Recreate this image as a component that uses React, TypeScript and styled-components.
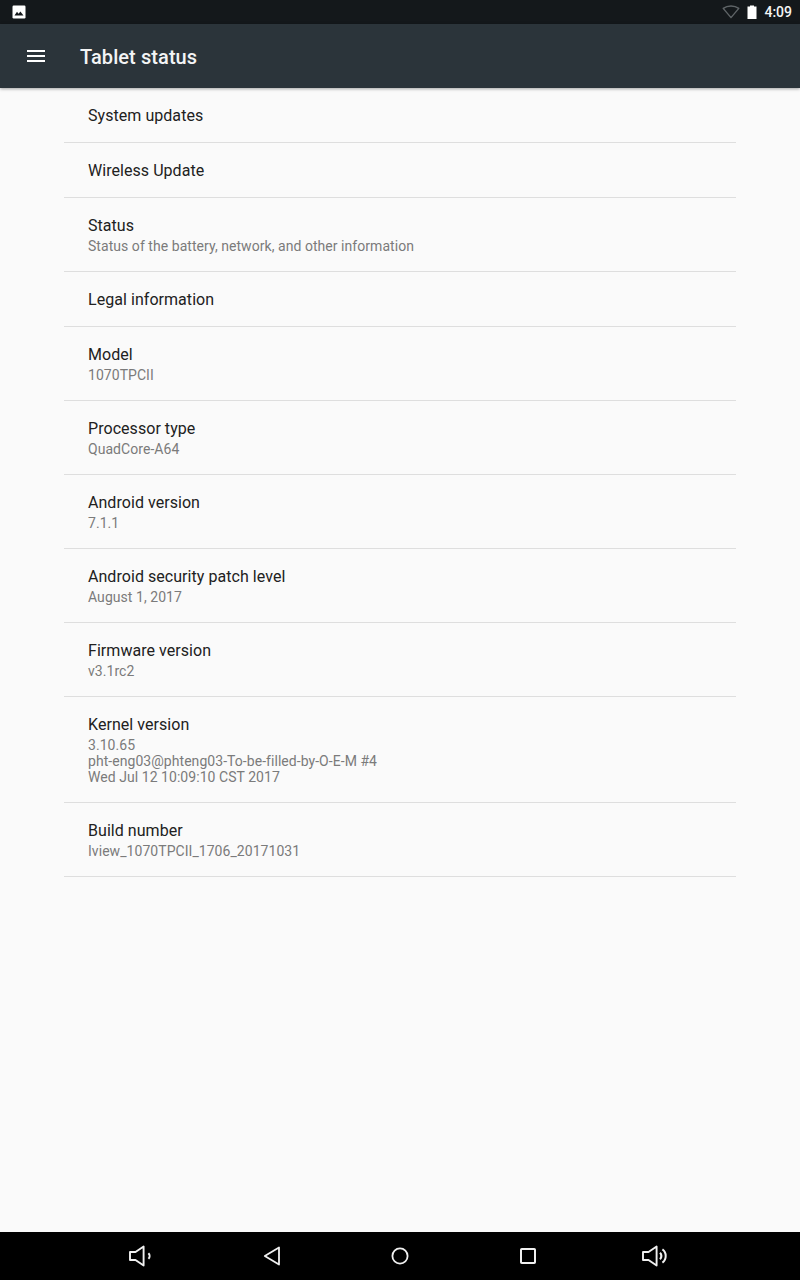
import React from "react";
import styled, { createGlobalStyle } from "styled-components";

const Global = createGlobalStyle`
  html, body { margin: 0; padding: 0; background: #fafafa; }
  * { box-sizing: border-box; }
`;

const Screen = styled.div`
  width: 800px;
  height: 1280px;
  display: flex;
  flex-direction: column;
  background: #fafafa;
  font-family: Roboto, "Liberation Sans", sans-serif;
  overflow: hidden;
`;

const StatusBar = styled.div`
  height: 24px;
  flex: none;
  background: #14181b;
  display: flex;
  align-items: center;
  justify-content: space-between;
  padding: 0 8px 0 12px;
  color: #fff;
`;

const StatusRight = styled.div`
  display: flex;
  align-items: center;
`;

const Clock = styled.span`
  font-size: 14px;
  font-weight: 500;
  color: #f4f5f5;
  margin-left: 7px;
`;

const Toolbar = styled.header`
  height: 64px;
  flex: none;
  background: #2b343a;
  display: flex;
  align-items: center;
  padding-left: 27px;
  box-shadow: 0 1px 3px rgba(0, 0, 0, 0.35);
  position: relative;
  z-index: 1;
`;

const Title = styled.h1`
  margin: 2px 0 0 35px;
  font-size: 20px;
  font-weight: 500;
  letter-spacing: 0.08px;
  color: #f3f4f5;
`;

const List = styled.main`
  flex: 1;
  padding: 0 64px;
`;

const Row = styled.div`
  padding: 17px 24px 15px;
  border-bottom: 1px solid #dedede;
`;

const RowTitle = styled.div`
  font-size: 16px;
  line-height: 22px;
  letter-spacing: 0.05px;
  color: #212121;
`;

const RowSub = styled.div`
  margin: 1px 0 2px;
  font-size: 14px;
  line-height: 16px;
  letter-spacing: 0.05px;
  color: #7b7b7b;
  white-space: pre-line;
`;

const NavBar = styled.nav`
  height: 48px;
  flex: none;
  background: #000;
  display: grid;
  grid-template-columns: repeat(5, 128px);
  justify-content: center;
  align-items: center;
  justify-items: center;
  color: #f0f0f0;
`;

const SpeakerSvg = styled.svg<{ $shift: number }>`
  margin-right: ${(p) => p.$shift * 2}px;
`;

const BatterySvg = styled.svg`
  margin-left: 7px;
`;

const rows: { title: string; sub?: string }[] = [
  { title: "System updates" },
  { title: "Wireless Update" },
  { title: "Status", sub: "Status of the battery, network, and other information" },
  { title: "Legal information" },
  { title: "Model", sub: "1070TPCII" },
  { title: "Processor type", sub: "QuadCore-A64" },
  { title: "Android version", sub: "7.1.1" },
  { title: "Android security patch level", sub: "August 1, 2017" },
  { title: "Firmware version", sub: "v3.1rc2" },
  {
    title: "Kernel version",
    sub: "3.10.65\npht-eng03@phteng03-To-be-filled-by-O-E-M #4\nWed Jul 12 10:09:10 CST 2017",
  },
  { title: "Build number", sub: "Iview_1070TPCII_1706_20171031" },
];

const ImageIcon = () => (
  <svg width="14" height="14" viewBox="0 0 14 14">
    <rect x="0.5" y="0.5" width="13" height="13" rx="1.2" fill="#fff" />
    <path d="M2.5 10.5 L5 6.8 L6.6 8.8 L8.4 6.4 L11.5 10.5 Z" fill="#14181b" />
  </svg>
);

const WifiIcon = () => (
  <svg width="18" height="14" viewBox="0 0 18 14">
    <path
      d="M9 12.6 L1.2 3.4 C3.3 1.9 6 1 9 1 C12 1 14.7 1.9 16.8 3.4 Z"
      fill="none"
      stroke="#5f6467"
      strokeWidth="1.4"
      strokeLinejoin="round"
    />
  </svg>
);

const BatteryIcon = () => (
  <BatterySvg width="10" height="14" viewBox="0 0 10 14">
    <path d="M3 0.5 H7 V1.5 H9.5 V14 H0.5 V1.5 H3 Z" fill="#fff" />
  </BatterySvg>
);

const MenuIcon = () => (
  <svg width="18" height="12" viewBox="0 0 18 12">
    <path d="M0 1 H18 M0 6 H18 M0 11 H18" stroke="#fff" strokeWidth="2" />
  </svg>
);

const Speaker = ({ loud, shift }: { loud?: boolean; shift: number }) => (
  <SpeakerSvg $shift={shift} width="28" height="24" viewBox="0 0 28 24" fill="none" stroke="currentColor" strokeWidth="1.9">
    <path d="M2 8 H7.5 L15.6 2.5 V21.5 L7.5 16 H2 Z" strokeLinejoin="round" />
    {loud ? (
      <>
        <path d="M19 8.8 C20.8 10.4 20.8 13.6 19 15.2" strokeWidth="2.2" />
        <path d="M21.4 5.4 C25.8 8.4 25.8 15.6 21.4 18.6" strokeWidth="2" />
      </>
    ) : (
      <path d="M20.4 9.2 C22 10.8 22 13.2 20.4 14.8" strokeWidth="2" />
    )}
  </SpeakerSvg>
);

const Back = () => (
  <svg width="18" height="20" viewBox="0 0 18 20" fill="none" stroke="currentColor" strokeWidth="1.8" strokeLinejoin="round">
    <path d="M16 1.5 V18.5 L1.8 10 Z" />
  </svg>
);

const Home = () => (
  <svg width="18" height="18" viewBox="0 0 18 18" fill="none" stroke="currentColor" strokeWidth="1.8">
    <circle cx="9" cy="9" r="7.6" />
  </svg>
);

const Recent = () => (
  <svg width="16" height="16" viewBox="0 0 16 16" fill="none" stroke="currentColor" strokeWidth="2" strokeLinejoin="round">
    <rect x="1" y="1" width="14" height="14" rx="0.8" />
  </svg>
);

export default function App() {
  return (
    <Screen>
      <Global />
      <StatusBar>
        <ImageIcon />
        <StatusRight>
          <WifiIcon />
          <BatteryIcon />
          <Clock>4:09</Clock>
        </StatusRight>
      </StatusBar>
      <Toolbar>
        <MenuIcon />
        <Title>Tablet status</Title>
      </Toolbar>
      <List>
        {rows.map((r) => (
          <Row key={r.title}>
            <RowTitle>{r.title}</RowTitle>
            {r.sub && <RowSub>{r.sub}</RowSub>}
          </Row>
        ))}
      </List>
      <NavBar>
        <Speaker shift={2} />
        <Back />
        <Home />
        <Recent />
        <Speaker loud shift={1} />
      </NavBar>
    </Screen>
  );
}
